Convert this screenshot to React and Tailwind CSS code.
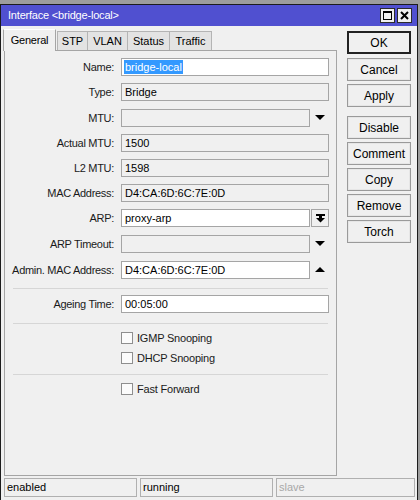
const font = { fontFamily: '"Liberation Sans", Arial, sans-serif' };

const fields = [
  { label: 'Name:', value: 'bridge-local', kind: 'edit', selected: true, mt: 'mt-[7px]' },
  { label: 'Type:', value: 'Bridge', kind: 'ro', mt: 'mt-[7px]' },
  { label: 'MTU:', value: '', kind: 'ro', extra: 'down', mt: 'mt-[8px]' },
  { label: 'Actual MTU:', value: '1500', kind: 'ro', mt: 'mt-[7px]' },
  { label: 'L2 MTU:', value: '1598', kind: 'ro', mt: 'mt-[7px]' },
  { label: 'MAC Address:', value: 'D4:CA:6D:6C:7E:0D', kind: 'ro', mt: 'mt-[7px]' },
  { label: 'ARP:', value: 'proxy-arp', kind: 'edit', extra: 'button', mt: 'mt-[7px]' },
  { label: 'ARP Timeout:', value: '', kind: 'ro', extra: 'down', mt: 'mt-[8px]' },
  { label: 'Admin. MAC Address:', value: 'D4:CA:6D:6C:7E:0D', kind: 'edit', extra: 'up', mt: 'mt-[8px]' },
];

const buttons = [
  { text: 'OK', def: true, mt: 'mt-0' },
  { text: 'Cancel', mt: 'mt-[4px]' },
  { text: 'Apply', mt: 'mt-[3px]' },
  { text: 'Disable', mt: 'mt-[9px]' },
  { text: 'Comment', mt: 'mt-[3px]' },
  { text: 'Copy', mt: 'mt-[3px]' },
  { text: 'Remove', mt: 'mt-[3px]' },
  { text: 'Torch', mt: 'mt-[3px]' },
];

function DownArrow() {
  return (
    <svg width="10" height="6" viewBox="0 0 10 6" className="ml-[5px]">
      <polygon points="0,0 10,0 5,5" fill="#000" />
    </svg>
  );
}

function UpArrow() {
  return (
    <svg width="10" height="6" viewBox="0 0 10 6" className="ml-[5px]">
      <polygon points="0,5 10,5 5,0" fill="#000" />
    </svg>
  );
}

function FieldRow({ f }) {
  const wide = f.extra ? 'w-[189px]' : 'w-[208px]';
  return (
    <div className={`flex items-center h-[18px] ${f.mt}`}>
      <div className="w-[110px] text-right pr-[1px] text-[11px] text-[#1a1a1a] tracking-[-0.3px]">{f.label}</div>
      <div
        className={`ml-[6px] h-[18px] ${wide} border border-[#a5a5a5] flex items-center pl-[2px] text-[11px] text-black ${
          f.kind === 'edit' ? 'bg-white' : 'bg-[#f0f0f0]'
        }`}
      >
        {f.selected ? (
          <span className="bg-[#3399ff] text-white leading-[14px] px-[1px]">{f.value}</span>
        ) : (
          <span className="px-[1px]">{f.value}</span>
        )}
      </div>
      {f.extra === 'down' && <DownArrow />}
      {f.extra === 'up' && <UpArrow />}
      {f.extra === 'button' && (
        <div className="ml-[1px] w-[18px] h-[18px] border border-[#a5a5a5] bg-[#f0f0f0] flex items-center justify-center">
          <svg width="9" height="9" viewBox="0 0 9 9">
            <rect x="0" y="0" width="9" height="2" fill="#000" />
            <rect x="3" y="2" width="3" height="2" fill="#000" />
            <polygon points="0,4 9,4 4.5,8.5" fill="#000" />
          </svg>
        </div>
      )}
    </div>
  );
}

function Check({ label, mt }) {
  return (
    <div className={`flex items-center h-[12px] ${mt}`}>
      <div className="ml-[116px] w-[12px] h-[12px] border border-[#8e8e8e] bg-[#fbfbfb]" />
      <span className="ml-[4px] text-[11px] leading-[12px] text-[#1a1a1a] tracking-[-0.2px]">{label}</span>
    </div>
  );
}

export default function App() {
  return (
    <div className="w-[420px] h-[500px] bg-[#9d9d9d] overflow-hidden" style={font}>
      <div className="mt-[4px] w-[418px] h-[496px] border border-b-0 border-[#1c1c1c] bg-[#f0f0f0] flex flex-col">
        <div className="h-[22px] bg-[#5050d0] flex items-center pl-[7px] pr-[5px]">
          <span className="text-white text-[11px] tracking-[-0.2px]">Interface &lt;bridge-local&gt;</span>
          <div className="ml-auto flex gap-[2px]">
            <div className="w-[15px] h-[15px] bg-[#f0f0f0] border border-[#2b2b2b] flex items-center justify-center">
              <svg width="9" height="9" viewBox="0 0 9 9">
                <rect x="0.5" y="0.5" width="8" height="8" fill="none" stroke="#000" />
                <rect x="0" y="0" width="9" height="2" fill="#000" />
              </svg>
            </div>
            <div className="w-[15px] h-[15px] bg-[#f0f0f0] border border-[#2b2b2b] flex items-center justify-center">
              <svg width="9" height="9" viewBox="0 0 9 9">
                <path d="M1 1 L8 8 M8 1 L1 8" stroke="#000" strokeWidth="2" />
              </svg>
            </div>
          </div>
        </div>

        <div className="flex flex-1">
          <div className="pl-[3px] pt-[3px] flex flex-col">
            <div className="flex items-end h-[21px] -ml-[1px]">
              <div className="relative z-10 -mb-px h-[22px] w-[53px] bg-[#f0f0f0] border border-b-0 border-[#a5a5a5] border-t-white flex items-center justify-center text-[11px] tracking-[-0.2px]">
                General
              </div>
              <div className="ml-[1px] h-[19px] w-[31px] bg-[#e3e3e3] border border-b-0 border-[#b4b4b4] flex items-center justify-center text-[11px] pt-[1px]">STP</div>
              <div className="h-[19px] w-[40px] bg-[#e3e3e3] border border-b-0 border-l-0 border-[#b4b4b4] flex items-center justify-center text-[11px] pt-[1px]">VLAN</div>
              <div className="h-[19px] w-[42px] bg-[#e3e3e3] border border-b-0 border-l-0 border-[#b4b4b4] flex items-center justify-center text-[11px] pt-[1px]">Status</div>
              <div className="h-[19px] w-[42px] bg-[#e3e3e3] border border-b-0 border-l-0 border-[#b4b4b4] flex items-center justify-center text-[11px] pt-[1px]">Traffic</div>
            </div>
            <div className="w-[333px] h-[426px] border border-[#a5a5a5] bg-[#f0f0f0] flex flex-col">
              {fields.map((f) => (
                <FieldRow key={f.label} f={f} />
              ))}
              <div className="mt-[9px] ml-[8px] w-[315px] h-px bg-[#d6d6d6]" />
              <FieldRow f={{ label: 'Ageing Time:', value: '00:05:00', kind: 'edit', mt: 'mt-[6px]' }} />
              <div className="mt-[10px] ml-[8px] w-[315px] h-px bg-[#d6d6d6]" />
              <Check label="IGMP Snooping" mt="mt-[8px]" />
              <Check label="DHCP Snooping" mt="mt-[8px]" />
              <div className="mt-[10px] ml-[8px] w-[315px] h-px bg-[#d6d6d6]" />
              <Check label="Fast Forward" mt="mt-[8px]" />
            </div>
          </div>

          <div className="ml-[10px] pt-[5px] flex flex-col">
            {buttons.map((b) => (
              <div
                key={b.text}
                className={`${b.mt} w-[64px] h-[23px] bg-[#f0f0f0] flex items-center justify-center text-[12px] text-black ${
                  b.def ? 'border-2 border-[#222]' : 'border border-[#9a9a9a] shadow-[inset_0_0_0_1px_#e6e6e6]'
                }`}
              >
                {b.text}
              </div>
            ))}
          </div>
        </div>

        <div className="flex gap-[3px] pl-[3px] mb-[3px] mt-[2px]">
          <div className="w-[133px] h-[19px] border border-[#b0b0b0] flex items-center pl-[2px] text-[11px] text-black">enabled</div>
          <div className="w-[133px] h-[19px] border border-[#b0b0b0] flex items-center pl-[2px] text-[11px] text-black">running</div>
          <div className="w-[139px] h-[19px] border border-[#b0b0b0] flex items-center pl-[2px] text-[11px] text-[#a8a8a8]">slave</div>
        </div>
      </div>
    </div>
  );
}
